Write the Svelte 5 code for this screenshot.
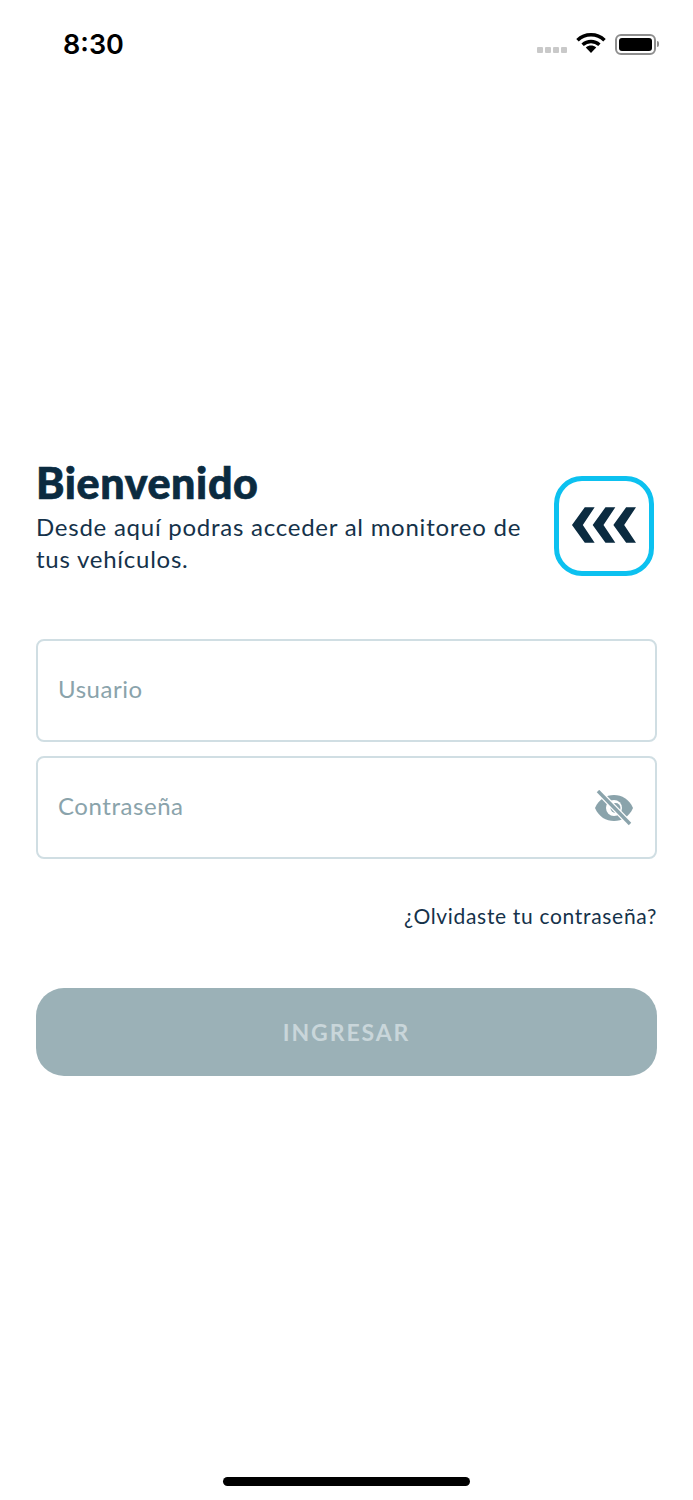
<script>
  let usuario = $state('');
  let clave = $state('');
</script>

<div class="screen">
  <header class="status">
    <span class="time">8:30</span>
    <div class="status-icons">
      <div class="signal"><i></i><i></i><i></i><i></i></div>
      <svg class="wifi" width="30" height="22" viewBox="0 0 30 22" aria-hidden="true">
        <path d="M1.5 8.2C9 1 21 1 28.5 8.2" fill="none" stroke="#000" stroke-width="3.6"/>
        <path d="M6.6 12.8C11.4 8.4 18.6 8.4 23.4 12.8" fill="none" stroke="#000" stroke-width="3.4"/>
        <path d="M9.8 15.5C13 12.9 17 12.9 20.2 15.5L15 21Z" fill="#000"/>
      </svg>
      <div class="battery"><div class="cell"></div></div>
      <div class="cap"></div>
    </div>
  </header>

  <main class="content">
    <section class="intro">
      <div class="copy">
        <h1>Bienvenido</h1>
        <p>Desde aquí podras acceder al monitoreo de tus vehículos.</p>
      </div>
      <div class="logo">
        <svg class="chevrons" width="65" height="36" viewBox="0 0 66 36" aria-hidden="true">
          <path d="M14 0H24L12 18L24 36H14L1 18Z" fill="#0b2b40"/>
          <path d="M35 0H45L33 18L45 36H35L22 18Z" fill="#0b2b40"/>
          <path d="M56 0H66L54 18L66 36H56L43 18Z" fill="#0b2b40"/>
        </svg>
      </div>
    </section>

    <form class="form" onsubmit={(e) => e.preventDefault()}>
      <label class="field">
        <input bind:value={usuario} placeholder="Usuario" aria-label="Usuario" />
      </label>
      <label class="field">
        <input bind:value={clave} type="password" placeholder="Contraseña" aria-label="Contraseña" />
        <svg class="eye" width="40" height="36" viewBox="0 0 40 36" aria-hidden="true">
          <path d="M1 18C5 9 12 5 20 5C28 5 35 9 39 18C35 27 28 31 20 31C12 31 5 27 1 18Z" fill="#8aa3ab"/>
          <circle cx="20" cy="18" r="8" fill="#fff"/>
          <circle cx="21.5" cy="18" r="5" fill="#8aa3ab"/>
          <path d="M4 1L36 34" stroke="#fff" stroke-width="6"/>
          <path d="M4 1L36 34" stroke="#8aa3ab" stroke-width="3.4"/>
        </svg>
      </label>
      <a class="forgot" href="#olvido">¿Olvidaste tu contraseña?</a>
      <button type="submit" class="submit" disabled>INGRESAR</button>
    </form>
  </main>

  <div class="home-bar"></div>
</div>

<style>
  :global(body) {
    margin: 0;
    background: #fff;
  }
  .screen {
    position: relative;
    height: 1500px;
    width: 693px;
    overflow: hidden;
    background: #fff;
    font-family: Lato, "Noto Sans", sans-serif;
    color: #0b2b40;
    box-sizing: border-box;
  }
  .status {
    display: flex;
    justify-content: space-between;
    align-items: center;
    height: 88px;
    padding: 0 34px 0 63px;
    box-sizing: border-box;
  }
  .time {
    font-family: Inter, "Liberation Sans", sans-serif;
    font-size: 27px;
    font-weight: 600;
    color: #000;
    line-height: 1;
  }
  .status-icons {
    display: flex;
    align-items: center;
  }
  .signal {
    display: flex;
    gap: 2px;
    margin: 12px 8px 0 0;
  }
  .signal i {
    width: 6px;
    height: 6px;
    background: #c9c9c9;
    border-radius: 1px;
  }
  .wifi {
    margin-right: 10px;
    transform: translate(1px, -1px);
  }
  .battery {
    width: 41px;
    height: 21px;
    padding: 2px;
    border: 2px solid #8e8e8e;
    border-radius: 6px;
    box-sizing: border-box;
  }
  .cell {
    width: 100%;
    height: 100%;
    background: #000;
    border-radius: 3px;
  }
  .cap {
    width: 2px;
    height: 6px;
    margin-left: 1px;
    background: #8e8e8e;
    border-radius: 0 2px 2px 0;
  }
  .content {
    padding: 370px 36px 0;
  }
  .intro {
    display: flex;
    justify-content: space-between;
    align-items: flex-start;
  }
  .copy {
    width: 500px;
  }
  h1 {
    margin: 0;
    font-size: 43px;
    font-weight: 900;
    line-height: 50px;
    letter-spacing: 0.6px;
    -webkit-text-stroke: 0.7px #0b2b40;
  }
  p {
    margin: 3px 0 0;
    font-size: 24px;
    line-height: 32px;
    letter-spacing: 0.75px;
    color: #15324a;
  }
  .logo {
    display: flex;
    align-items: center;
    justify-content: center;
    width: 100px;
    height: 100px;
    margin: 18px 3px 0 0;
    border: 5px solid #0cc1f0;
    border-radius: 28px;
    box-sizing: border-box;
  }
  .chevrons {
    margin: 0 1px 2px 0;
  }
  .form {
    display: flex;
    flex-direction: column;
    margin-top: 63px;
  }
  .field {
    display: flex;
    align-items: center;
    height: 103px;
    margin-bottom: 14px;
    padding: 0 20px;
    border: 2px solid #d0dee3;
    border-radius: 8px;
    box-sizing: border-box;
  }
  input {
    flex: 1;
    min-width: 0;
    border: 0;
    outline: 0;
    padding: 0 0 5px;
    background: transparent;
    font: inherit;
    font-size: 24px;
    letter-spacing: 0.55px;
    color: #0b2b40;
  }
  input::placeholder {
    color: #8aa3ab;
    opacity: 1;
  }
  .eye {
    margin-right: 1px;
  }
  .forgot {
    align-self: flex-end;
    margin-top: 27px;
    font-size: 21px;
    line-height: 32px;
    letter-spacing: 0.68px;
    color: #15324a;
    text-decoration: none;
  }
  .submit {
    height: 88px;
    margin-top: 56px;
    border: 0;
    border-radius: 28px;
    background: #9bb1b7;
    color: #c9d6da;
    font: inherit;
    font-size: 23px;
    font-weight: 700;
    letter-spacing: 1.9px;
  }
  .home-bar {
    position: absolute;
    left: 223px;
    bottom: 14px;
    width: 247px;
    height: 9px;
    border-radius: 5px;
    background: #000;
  }
</style>
